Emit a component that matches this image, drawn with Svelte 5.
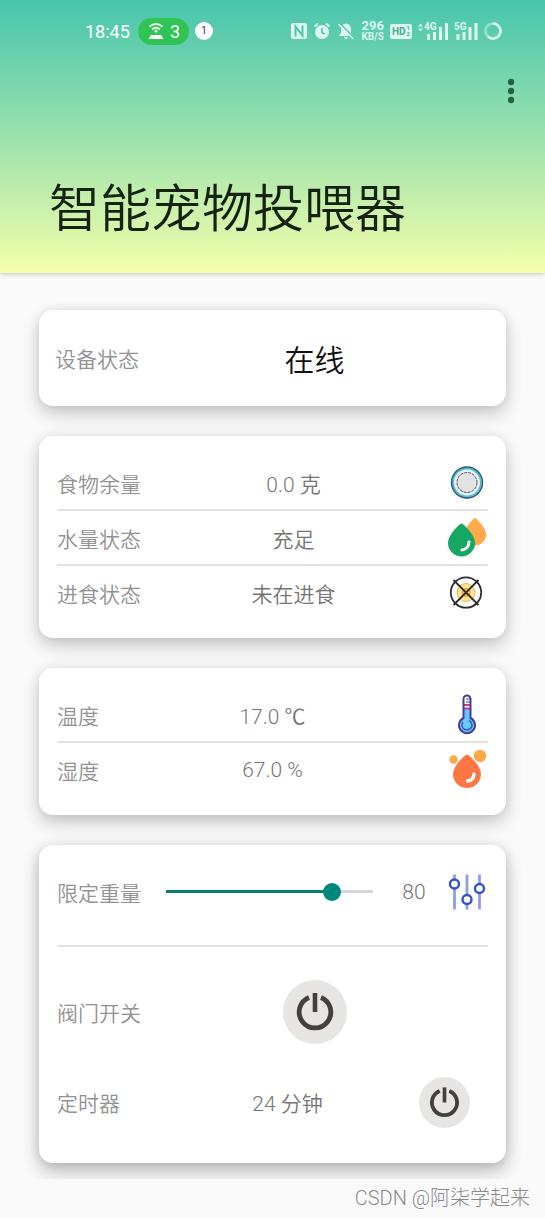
<script lang="ts">
  let foodWeight = $state(0);
  let waterStatus = $state("充足");
  let eating = $state(false);
  let temperature = $state(17);
  let humidity = $state(67);
  let limitWeight = $state(80);
  let valveOpen = $state(false);
  let timerMinutes = $state(24);
  let timerOn = $state(false);
</script>

{#snippet powerIcon()}
  <svg viewBox="0 0 64 64" aria-hidden="true">
    <path
      d="M26 17.500A15.800 15.800 0 1 0 38 17.500"
      fill="none"
      stroke="#424040"
      stroke-width="4.800"
    />
    <path d="M32 13V32" stroke="#424040" stroke-width="4.600" />
  </svg>
{/snippet}

<header class="top">
  <div class="statusbar">
    <span class="clock">18:45</span>
    <span class="hotspot">
      <svg width="18" height="18" viewBox="0 0 18 18" aria-hidden="true">
        <g fill="none" stroke="#fff" stroke-width="1.6">
          <path d="M2.500 4.600Q9 -1 15.500 4.600" />
          <path d="M5 7.400Q9 3.800 13 7.400" />
        </g>
        <circle cx="9" cy="9" r="1.500" fill="#fff" />
        <path d="M4 13H14L16.500 17H1.500Z" fill="#fff" />
      </svg>
      3
    </span>
    <span class="count">1</span>

    <div class="signals">
      <svg width="16" height="16" viewBox="0 0 16 16" aria-hidden="true">
        <rect width="16" height="16" rx="2" fill="#dcf7ee" />
        <path
          d="M4.500 13.500V3.500L11.500 12.500V2.500"
          fill="none"
          stroke="#52c5a8"
          stroke-width="2"
        />
      </svg>
      <svg width="18" height="18" viewBox="0 0 18 18" aria-hidden="true">
        <circle cx="9" cy="10" r="7" fill="#dcf7ee" />
        <path
          d="M1.500 4.500L5 1.500M13 1.500L16.500 4.500"
          stroke="#dcf7ee"
          stroke-width="2"
        />
        <path d="M9 6V10.500L11.500 12" fill="none" stroke="#52c5a8" stroke-width="1.600" />
      </svg>
      <svg width="18" height="18" viewBox="0 0 18 18" aria-hidden="true">
        <path
          d="M9 1.500C5.500 2 4 4.500 4 7.500V11L2 14H16L14 11V7.500C14 4.500 12.500 2 9 1.500ZM7 15H11Q10.500 17 9 17T7 15Z"
          fill="#dcf7ee"
        />
        <path d="M2.500 1L17.500 16" stroke="#54c6a8" stroke-width="1.500" />
        <path d="M1.500 2L16.500 17" stroke="#dcf7ee" stroke-width="1.500" />
      </svg>
      <span class="speed"><b>296</b><small>KB/S</small></span>
      <span class="hd">HD<span class="hd-num"><i>1</i><i>2</i></span></span>
      <svg class="bars" width="30" height="18" viewBox="0 0 30 18" aria-label="4G">
        <path d="M0 4.500L2.500 1.500L5 4.500ZM0 6.500L2.500 9.500L5 6.500Z" fill="#dcf7ee" />
        <text x="6" y="8">4G</text>
        <path d="M10.500 12V18M16.500 10V18M22.500 5V18M28.500 1V18" stroke="#dcf7ee" stroke-width="3" />
      </svg>
      <svg class="bars" width="24" height="18" viewBox="0 0 24 18" aria-label="5G">
        <text x="0" y="8">5G</text>
        <path d="M4 12V18M10 10V18M16 5V18M22 1V18" stroke="#dcf7ee" stroke-width="3" />
      </svg>
      <svg width="18" height="18" viewBox="0 0 18 18" aria-hidden="true">
        <circle cx="9" cy="9" r="7.500" fill="none" stroke="#9be0cd" stroke-width="2.500" />
        <path d="M9 1.500A7.500 7.500 0 1 1 4 14.600" fill="none" stroke="#dcf7ee" stroke-width="2.500" />
      </svg>
    </div>
  </div>

  <div class="toolbar">
    <button class="more" aria-label="更多">
      <svg width="8" height="26" viewBox="0 0 8 26" aria-hidden="true">
        <circle cx="4" cy="4" r="3.200" />
        <circle cx="4" cy="13" r="3.200" />
        <circle cx="4" cy="22" r="3.200" />
      </svg>
    </button>
  </div>
  <h1>智能宠物投喂器</h1>
</header>

<main>
  <section class="card status">
    <span class="label">设备状态</span>
    <strong class="online">在线</strong>
  </section>

  <section class="card">
    <div class="row">
      <span class="label">食物余量</span>
      <span class="value">{foodWeight.toFixed(1)} 克</span>
      <svg class="icon" viewBox="0 0 42 42" aria-hidden="true">
        <circle cx="21" cy="20.500" r="15.500" fill="#63b8d3" stroke="#24607a" stroke-width="1.400" />
        <circle cx="21" cy="20.500" r="13" fill="#e9f2f9" />
        <circle
          cx="21"
          cy="20.500"
          r="10"
          fill="#e3e3e5"
          stroke="#4c5358"
          stroke-width="1"
          stroke-dasharray="3 1"
        />
      </svg>
    </div>
    <div class="row">
      <span class="label">水量状态</span>
      <span class="value">{waterStatus}</span>
      <svg class="icon" viewBox="0 0 42 42" aria-hidden="true">
        <path
          d="M29 1C30 1 40 10.500 40 17.500A11 11 0 0 1 18 17.500C18 10.500 28 1 29 1Z"
          fill="#ffa94a"
        />
        <path
          d="M15.500 6.500C17 6.500 29 17.500 29 26A13.500 13.500 0 0 1 2 26C2 17.500 14 6.500 15.500 6.500Z"
          fill="#17a765"
        />
        <path
          d="M23 25Q22.500 32 16 33"
          fill="none"
          stroke="#fff"
          stroke-width="3"
          stroke-linecap="round"
        />
      </svg>
    </div>
    <div class="row">
      <span class="label">进食状态</span>
      <span class="value">{eating ? "正在进食" : "未在进食"}</span>
      <svg class="icon" viewBox="0 0 42 42" aria-hidden="true">
        <circle cx="20" cy="20.500" r="15.200" fill="#fff" stroke="#2d2d32" stroke-width="1.800" />
        <circle cx="20" cy="20.500" r="9" fill="#ffe391" stroke="#f1b33e" stroke-width="1" />
        <circle cx="20" cy="20.500" r="4" fill="#f8c748" stroke="#e3a02c" stroke-width="1" />
        <path d="M7.500 8L32.500 33M32.500 8L7.500 33" stroke="#2d2d32" stroke-width="1.800" />
      </svg>
    </div>
  </section>

  <section class="card">
    <div class="row">
      <span class="label">温度</span>
      <span class="value">{temperature.toFixed(1)} ℃</span>
      <svg class="icon" viewBox="0 0 42 42" aria-hidden="true">
        <path
          d="M17.500 5A3.500 3.500 0 0 1 24.500 5V24A8 8 0 1 1 17.500 24Z"
          fill="#69c8ff"
        />
        <path d="M17.500 15V5A3.500 3.500 0 0 1 24.500 5V15Z" fill="#fff" />
        <path d="M18 11H24M18 14.500H24" stroke="#c2447e" stroke-width="1.800" />
        <path
          d="M17.500 5A3.500 3.500 0 0 1 24.500 5V24A8 8 0 1 1 17.500 24Z"
          fill="none"
          stroke="#4a3b93"
          stroke-width="2"
        />
        <path d="M20 5H24M20 8H24" stroke="#4a3b93" stroke-width="1.200" />
        <path
          d="M17 28Q14 33 19 35.500Q24 37 26 32Q26 28 23 26.500"
          fill="none"
          stroke="#2f63bd"
          stroke-width="1.600"
        />
      </svg>
    </div>
    <div class="row">
      <span class="label">湿度</span>
      <span class="value">{humidity.toFixed(1)} %</span>
      <svg class="icon" viewBox="0 0 42 42" aria-hidden="true">
        <circle cx="7.500" cy="10.500" r="4.200" fill="#ffa94a" />
        <circle cx="34" cy="7" r="6.200" fill="#ffa94a" />
        <path
          d="M21 5.500C22.500 5.500 35 16.500 35 25A14 14 0 0 1 7 25C7 16.500 19.500 5.500 21 5.500Z"
          fill="#ff7644"
        />
        <path
          d="M28 25Q27.500 31.500 21.500 32"
          fill="none"
          stroke="#fff"
          stroke-width="3.400"
          stroke-linecap="round"
        />
      </svg>
    </div>
  </section>

  <section class="card controls">
    <div class="row limit">
      <label class="label" for="limit">限定重量</label>
      <input
        id="limit"
        type="range"
        min="0"
        max="100"
        bind:value={limitWeight}
        style="--fill: {limitWeight}%"
      />
      <output class="amount" for="limit">{limitWeight}</output>
      <svg class="icon" viewBox="0 0 42 42" aria-hidden="true">
        <path
          d="M8.500 3.500V38.500M21 3.500V38.500M33.500 3.500V38.500"
          stroke="#8ca0e6"
          stroke-width="2.800"
        />
        <g fill="#fff" stroke="#3553c6" stroke-width="2.400">
          <circle cx="8.500" cy="13" r="4.500" />
          <circle cx="21" cy="28.500" r="4.500" />
          <circle cx="33.500" cy="17.500" r="4.500" />
        </g>
      </svg>
    </div>
    <div class="row switch">
      <span class="label">阀门开关</span>
      <span class="value">
        <button
          class="power"
          aria-label="阀门开关"
          aria-pressed={valveOpen}
          onclick={() => (valveOpen = !valveOpen)}
        >
          {@render powerIcon()}
        </button>
      </span>
    </div>
    <div class="row switch timer">
      <span class="label">定时器</span>
      <span class="value">{timerMinutes} 分钟</span>
      <button
        class="power small"
        aria-label="定时器"
        aria-pressed={timerOn}
        onclick={() => (timerOn = !timerOn)}
      >
        {@render powerIcon()}
      </button>
    </div>
  </section>
</main>

<footer>CSDN @阿柒学起来</footer>

<style>
  :global(body) {
    background: #fafafa;
    font-family: Roboto, "Noto Sans CJK SC", sans-serif;
    font-weight: 350;
    color: #757575;
  }

  .top {
    box-sizing: border-box;
    height: 273px;
    background: linear-gradient(#47c5ae, #a9e6ad 58%, #f5ffab);
    box-shadow: 0 1px 5px rgba(0, 0, 0, 0.22);
  }

  .statusbar {
    display: flex;
    align-items: center;
    height: 62px;
    padding: 0 43px 0 85px;
    color: #fff;
  }

  .clock {
    width: 53px;
    font-size: 18px;
    font-weight: 400;
  }

  .hotspot {
    display: flex;
    align-items: center;
    justify-content: center;
    gap: 5px;
    width: 51px;
    height: 27px;
    border-radius: 14px;
    background: #2fc453;
    font-size: 18px;
    font-weight: 400;
  }

  .count {
    width: 18px;
    margin-left: 6px;
    border-radius: 50%;
    background: #fff;
    color: #333;
    font-size: 10px;
    font-weight: 400;
    line-height: 18px;
    text-align: center;
  }

  .signals {
    display: flex;
    align-items: center;
    gap: 6px;
    margin-left: auto;
    color: #dcf7ee;
  }

  .speed {
    display: flex;
    flex-direction: column;
    align-items: center;
  }

  .speed b {
    font-size: 13px;
    font-weight: 700;
    line-height: 12px;
  }

  .speed small {
    font-size: 10px;
    font-weight: 700;
    line-height: 10px;
  }

  .hd {
    display: flex;
    align-items: center;
    gap: 1px;
    height: 15px;
    padding: 0 2px;
    border-radius: 2px;
    background: #dcf7ee;
    color: #46ae95;
    font-size: 10px;
    font-weight: 700;
  }

  .hd-num {
    display: flex;
    flex-direction: column;
    font-size: 6px;
    line-height: 6px;
  }

  .hd-num i {
    font-style: normal;
  }

  .bars text {
    fill: #dcf7ee;
    font-size: 10px;
    font-weight: 700;
  }

  .toolbar {
    display: flex;
    justify-content: flex-end;
    align-items: center;
    height: 58px;
    padding-right: 20px;
  }

  .more {
    display: flex;
    padding: 10px;
    border: none;
    background: none;
    fill: #285e46;
    cursor: pointer;
  }

  h1 {
    margin: 53px 0 0 49px;
    color: #17210f;
    font-size: 51px;
    font-weight: 350;
    line-height: 74px;
    white-space: nowrap;
  }

  main {
    display: flex;
    flex-direction: column;
    gap: 30px;
    margin: 0 24px;
    padding: 37px 15px 16px;
    overflow: hidden;
  }

  .card {
    padding: 20px 18px 19px;
    border-radius: 14px;
    background: #fff;
    box-shadow:
      0 8px 18px rgba(0, 0, 0, 0.2),
      0 0 12px rgba(0, 0, 0, 0.08);
  }

  .status {
    display: flex;
    align-items: center;
    height: 96px;
    padding: 0 16px;
  }

  .label {
    color: #929292;
    font-size: 21px;
    white-space: nowrap;
  }

  .online {
    flex: 1;
    color: #111;
    font-size: 30px;
    font-weight: 350;
    text-align: center;
  }

  .row {
    display: flex;
    align-items: center;
    height: 53px;
    font-size: 21px;
  }

  .row + .row {
    border-top: 2px solid #e2e2e2;
  }

  .value {
    display: flex;
    flex: 1;
    justify-content: center;
  }

  .icon {
    flex: none;
    width: 42px;
    height: 42px;
  }

  .controls {
    padding-bottom: 16px;
    box-shadow:
      0 8px 18px rgba(0, 0, 0, 0.27),
      0 0 12px rgba(0, 0, 0, 0.08);
  }

  .limit {
    padding-bottom: 27px;
    border-bottom: 2px solid #e2e2e2;
    margin-bottom: 20px;
  }

  .limit input {
    flex: 1;
    min-width: 0;
    height: 20px;
    margin: 0 0 0 16px;
    appearance: none;
    background:
      linear-gradient(
          to right,
          #0b7f6e var(--fill),
          #d6d6d6 var(--fill)
        )
        center / calc(100% - 18px) 3px no-repeat;
    cursor: pointer;
  }

  .limit input::-webkit-slider-thumb {
    appearance: none;
    width: 18px;
    height: 18px;
    border-radius: 50%;
    background: #00897b;
  }

  .amount {
    width: 64px;
    text-align: center;
  }

  .row.switch {
    height: 90px;
    border-top: none;
  }

  .timer .value {
    padding-left: 54px;
  }

  .power {
    width: 64px;
    height: 64px;
    padding: 0;
    border: none;
    border-radius: 50%;
    background: #e7e6e5;
    cursor: pointer;
  }

  .power svg {
    display: block;
    width: 100%;
    height: 100%;
  }

  .power.small {
    width: 51px;
    height: 51px;
    margin: 0 18px;
  }

  footer {
    padding-right: 15px;
    color: #8a8a8a;
    font-size: 20px;
    font-weight: 300;
    line-height: 39px;
    text-align: right;
  }
</style>
